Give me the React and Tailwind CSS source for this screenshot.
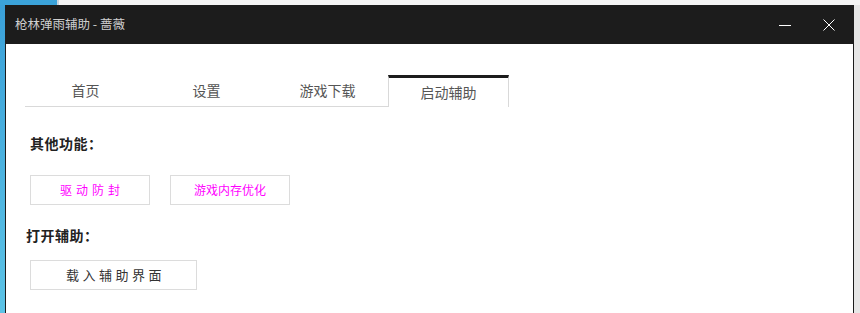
import React from "react";

const TABS = ["首页", "设置", "游戏下载", "启动辅助"];
const ACTIVE = 3;

function TitleBar() {
  return (
    <div className="h-[39px] bg-[#1c1c1c] flex items-center shrink-0">
      <span className="ml-[9px] text-[12.5px] text-[#cfcfcf]">
        枪林弹雨辅助 - 蔷薇
      </span>
      <div className="ml-auto flex items-center h-full">
        <button className="w-[44px] h-full flex items-center justify-center">
          <svg width="12" height="12" viewBox="0 0 12 12">
            <path d="M0 6.5H12" stroke="#fff" strokeWidth="1" />
          </svg>
        </button>
        <button className="w-[44px] h-full flex items-center justify-center mr-[2px]">
          <svg width="12" height="12" viewBox="0 0 12 12">
            <path d="M0.5 0.5L11.5 11.5M11.5 0.5L0.5 11.5" stroke="#fff" strokeWidth="1" />
          </svg>
        </button>
      </div>
    </div>
  );
}

function Tabs() {
  return (
    <div className="flex items-end ml-[19px] mt-[31px]">
      {TABS.map((t, i) =>
        i === ACTIVE ? (
          <div
            key={t}
            className="w-[121px] h-[32px] border-t-[3px] border-t-[#1c1c1c] border-x border-x-[#d9d9d9] flex items-center justify-center text-[14px] text-[#555]"
          >
            {t}
          </div>
        ) : (
          <div
            key={t}
            className="w-[121px] h-[32px] border-b border-[#d9d9d9] flex items-center justify-center text-[14px] text-[#555]"
          >
            {t}
          </div>
        )
      )}
    </div>
  );
}

function Btn({ children, className }) {
  return (
    <button
      className={`h-[30px] border border-[#dcdcdc] bg-white flex items-center justify-center ${className}`}
    >
      {children}
    </button>
  );
}

export default function App() {
  return (
    <div
      className="w-[860px] h-[313px] overflow-hidden flex flex-col bg-[#3ba3da]"
      style={{ fontFamily: '"Noto Sans CJK SC", "Noto Sans", sans-serif' }}
    >
      <div className="h-[5px] flex shrink-0">
        <div className="w-[57px] bg-[#3ba3da]" />
        <div className="w-[2px] bg-[#c9d4de]" />
        <div className="flex-1 bg-[#f4f4f4]" />
      </div>
      <div className="flex flex-1 min-h-0">
        <div className="w-[5px] bg-gradient-to-b from-[#3aa0d8] to-[#5cc3e6]" />
        <div className="w-[849px] flex flex-col border-x border-[#1c1c1c] bg-white">
          <TitleBar />
          <div className="flex-1 bg-white">
            <Tabs />
            <div className="pl-[24px] mt-[26px] text-[14px] leading-[20px] font-bold text-[#222] tracking-[0.5px]">
              其他功能：
            </div>
            <div className="flex gap-[20px] pl-[24px] mt-[22px]">
              <Btn className="w-[120px] text-[12px] text-[#ff00ff] tracking-[4px] pl-[4px]">驱动防封</Btn>
              <Btn className="w-[120px] text-[12px] text-[#ff00ff]">游戏内存优化</Btn>
            </div>
            <div className="pl-[20px] mt-[20px] text-[14px] leading-[20px] font-bold text-[#222] tracking-[0.5px]">
              打开辅助：
            </div>
            <div className="pl-[24px] mt-[15px]">
              <Btn className="w-[167px] h-[29px] text-[13px] text-[#333] tracking-[3.5px] pl-[4px]">载入辅助界面</Btn>
            </div>
          </div>
        </div>
        <div className="flex-1 bg-[#e6e6e6]" />
      </div>
    </div>
  );
}
